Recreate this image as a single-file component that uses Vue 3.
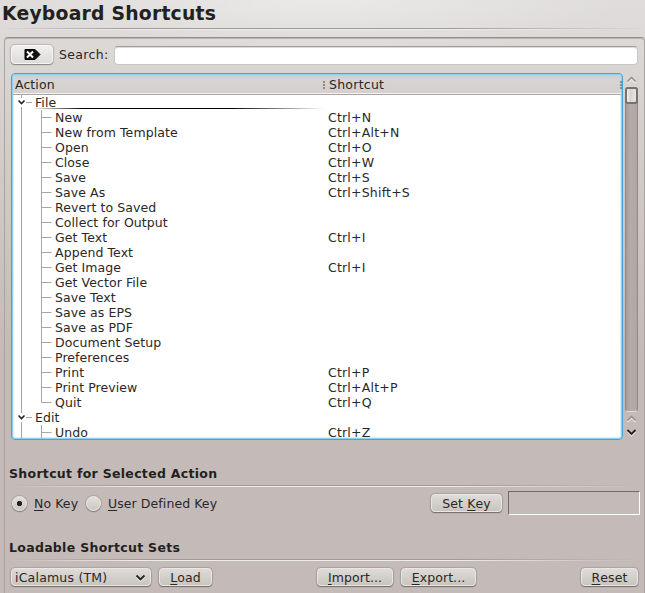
<script setup>
const actions = [
  ['New', 'Ctrl+N'], ['New from Template', 'Ctrl+Alt+N'], ['Open', 'Ctrl+O'], ['Close', 'Ctrl+W'],
  ['Save', 'Ctrl+S'], ['Save As', 'Ctrl+Shift+S'], ['Revert to Saved', ''], ['Collect for Output', ''],
  ['Get Text', 'Ctrl+I'], ['Append Text', ''], ['Get Image', 'Ctrl+I'], ['Get Vector File', ''],
  ['Save Text', ''], ['Save as EPS', ''], ['Save as PDF', ''], ['Document Setup', ''],
  ['Preferences', ''], ['Print', 'Ctrl+P'], ['Print Preview', 'Ctrl+Alt+P'], ['Quit', 'Ctrl+Q'],
]
const groups = [
  { name: 'File', items: actions, current: true },
  { name: 'Edit', items: [['Undo', 'Ctrl+Z']], open: true },
]
</script>

<template>
  <main class="page">
    <h1>Keyboard Shortcuts</h1>
    <div class="rule title-rule"></div>
    <section class="panel">
      <div class="search">
        <button class="btn clear" aria-label="Clear">
          <svg width="17" height="13" viewBox="0 0 17 13">
            <path d="M1 1.500h10l5 5-5 5H1z" fill="#111" stroke="#000" />
            <path d="M3 3.500l6 6M9 3.500l-6 6" stroke="#fff" stroke-width="2" />
          </svg>
        </button>
        <label>Search:</label>
        <div class="field"></div>
      </div>

      <div class="browser">
        <div class="list">
          <div class="head"><span class="c1">Action</span><i class="grip"></i><span class="c2">Shortcut</span><i class="grip last"></i></div>
          <div class="rows">
            <div v-for="g in groups" :key="g.name" class="group">
              <div class="row parent" :class="{ current: g.current }">
                <svg class="twist" width="20" height="15" viewBox="0 0 20 15">
                  <path d="M8.500 0v3M8.500 12v3M13 7.500h6" stroke="#a8a6a5" fill="none" />
                  <path d="M5.500 5.500l3 3 3-3" stroke="#222" stroke-width="1.600" fill="none" />
                </svg>
                <span>{{ g.name }}</span>
              </div>
              <div v-for="(a, i) in g.items" :key="a[0]" class="row">
                <svg class="branch" width="42" height="15" viewBox="0 0 42 15">
                  <path :d="i === g.items.length - 1 && !g.open ? 'M8.500 0v15M28.500 0v7.500h10' : 'M8.500 0v15M28.500 0v15M28.500 7.500h10'" stroke="#a8a6a5" fill="none" />
                </svg>
                <span class="name">{{ a[0] }}</span><span class="combo-key">{{ a[1] }}</span>
              </div>
            </div>
          </div>
        </div>
        <div class="scroll">
          <svg class="arr top" width="13" height="10" viewBox="0 0 13 10"><path d="M2.500 8l4-4 4 4" stroke="#f2f0ef" stroke-width="1.500" fill="none" /><path d="M2.500 6.500l4-4 4 4" stroke="#928d8b" stroke-width="1.500" fill="none" /></svg>
          <div class="track"><div class="thumb"></div></div>
          <svg class="arr" width="13" height="13" viewBox="0 0 13 13"><path d="M2.500 10l4-4 4 4" stroke="#eeeae9" stroke-width="1.500" fill="none" /><path d="M2.500 8.500l4-4 4 4" stroke="#928d8b" stroke-width="1.500" fill="none" /></svg>
          <svg class="arr" width="13" height="13" viewBox="0 0 13 13"><path d="M2.500 6.500l4 4 4-4" stroke="#eeeae9" stroke-width="1.500" fill="none" /><path d="M2.500 5l4 4 4-4" stroke="#222" stroke-width="1.800" fill="none" /></svg>
        </div>
      </div>

      <h2>Shortcut for Selected Action</h2>
      <div class="rule"></div>
      <div class="keys">
        <i class="radio on"></i><label class="nokey"><u>N</u>o Key</label>
        <i class="radio"></i><label><u>U</u>ser Defined Key</label>
        <button class="btn set">Set <u>K</u>ey</button>
        <div class="sunken"></div>
      </div>

      <h2 class="second">Loadable Shortcut Sets</h2>
      <div class="rule"></div>
      <div class="sets">
        <button class="btn combo"><span>iCalamus (TM)</span>
          <svg width="11" height="9" viewBox="0 0 11 9"><path d="M1.500 4l4 4 4-4" stroke="#f5f3f2" stroke-width="1.500" fill="none" /><path d="M1.500 2.500l4 4 4-4" stroke="#222" stroke-width="1.800" fill="none" /></svg>
        </button>
        <button class="btn load"><u>L</u>oad</button>
        <button class="btn import"><u>I</u>mport...</button>
        <button class="btn export"><u>E</u>xport...</button>
        <button class="btn reset"><u>R</u>eset</button>
      </div>
    </section>
  </main>
</template>

<style>
body { margin: 0; overflow: hidden; }
</style>
<style scoped>
* { box-sizing: border-box; }
.page {
  width: 645px; height: 593px; overflow: hidden; color: #2b2726;
  font: 12.5px/15px "DejaVu Sans", sans-serif; letter-spacing: .08px;
  background: radial-gradient(ellipse 300px 58px at 50% 0, rgba(240,240,239,.65), rgba(240,240,239,0)),
    linear-gradient(#dfdddc 0, #dad6d3 60px, #d2ccc9 160px, #c4bbb8 350px, #c4bbb8);
}
h1 { margin: 0; padding-left: 2px; height: 28px; font-size: 18.8px; letter-spacing: .22px; line-height: 27px; font-weight: bold; white-space: nowrap; color: #231f1e; }
h2 { margin: 0 0 0 -1px; padding-top: 26px; height: 45px; font-size: 12.5px; letter-spacing: .3px; line-height: 15px; font-weight: bold; color: #231f1e; }
.rule { height: 2px; background: linear-gradient(#a09a97 50%, #eeeceb 50%); -webkit-mask-image: linear-gradient(90deg, transparent, #000 20%, #000 70%, transparent); mask-image: linear-gradient(90deg, transparent, #000 20%, #000 70%, transparent); }
.panel { margin: 7px 0 0 4px; height: 580px; width: 641px; padding: 6px 4px 0 5px; border: 1px solid #aaa4a1; border-top-color: #948e8b; border-radius: 4px; box-shadow: inset 0 1px #bbb5b2; }
.search { display: flex; align-items: center; height: 20px; margin-top: 1px; }
.btn { flex: none; display: flex; align-items: center; justify-content: center; padding: 0; height: 18px; font: inherit; letter-spacing: inherit; color: inherit; white-space: pre; border: 1px solid #e9e7e5; border-radius: 4px; background: linear-gradient(#dedbd8, #c9c5be); box-shadow: 0 1px 1px #746e6b, 0 0 1px 1px #aaa3a0; }
.clear { width: 42px; height: 19px; margin: -1px 0 0 1px; background: linear-gradient(#f1f0ef, #dedbd8); box-shadow: 0 1px 1px #8c8684, 0 0 1px 1px #bcb7b4; border-color: #f8f7f6; }
.search label { margin: -1px 0 0 6px; width: 55px; letter-spacing: .35px; }
.field { flex: 1; height: 19px; margin-right: 2px; background: #fff; border: 1px solid #c8c5c3; border-top-color: #a09d9b; border-radius: 4px; box-shadow: inset 0 1px #dddbda; }
.browser { display: flex; margin: 8px 0 0 1px; height: 367px; }
.list { flex: none; width: 612px; height: 367px; border: 1px solid #43a5d6; border-radius: 4px; background: #fff; overflow: hidden; box-shadow: inset 0 0 0 1px #8fd0ef, inset 0 0 1px 2px #d5eefa; padding: 1px; }
.head { display: flex; align-items: center; height: 20px; padding-left: 2px; background: linear-gradient(#c5cfd3, #d8d4d1 4px, #d5d0cd); border-bottom: 1px solid #aaa39f; box-shadow: inset 0 -1px #f5f3f2; }
.c1 { width: 307px; flex: none; }
.c2 { width: 290px; flex: none; letter-spacing: .25px; }
.grip { flex: none; width: 6px; height: 8px; background: radial-gradient(circle at 1px 1px, #8d8987 .8px, transparent 1px) 0 0 / 6px 3px; }
.grip:not(.last) { margin-right: 1px; }
.c1 + .grip { margin-left: 1px; width: 5px; }
.last { margin-left: 1px; width: 2px; }
.rows { height: 343px; overflow: hidden; }
.row { display: flex; height: 15px; white-space: pre; }
.row svg { flex: none; }
.twist { width: 22px; padding-right: 2px; }
.parent { position: relative; }
.current::after { content: ""; position: absolute; left: 18px; width: 294px; top: 13px; height: 1px; background: linear-gradient(90deg, transparent, #000 18%, #000 68%, transparent); }
.name { width: 273px; flex: none; }
.combo-key { letter-spacing: .2px; }
.scroll { width: 13px; margin-left: 2px; display: flex; flex-direction: column; }
.arr { flex: none; display: block; }
.arr.top { margin: 2px 0 2px; }
.track { flex: none; width: 13px; height: 325px; border: 1px solid #8f8987; border-bottom-color: #e2dedc; border-radius: 4px; background: linear-gradient(90deg, #a39d9a, #b3aca9 40%, #aea7a4); }
.thumb { width: 13px; height: 17px; margin: -1px; border: 2px solid #77716f; border-radius: 3px; background: linear-gradient(90deg, #f3f1f0, #d6d2cf 35%, #e7e4e2); }
.keys { display: flex; align-items: center; height: 26px; margin-top: 3px; }
u { text-decoration: underline; text-decoration-thickness: 1px; text-underline-offset: 2px; }
.radio { flex: none; width: 15px; height: 15px; margin: 0 7px 0 2px; border-radius: 50%; border: 1px solid #eae7e5; background: linear-gradient(#e3e0dd, #cbc7c2); box-shadow: 0 1px 1px #827c79, 0 0 1px 1px #aca5a2; }
.on { background: radial-gradient(circle, #222 2.300px, transparent 3px), linear-gradient(#e3e0dd, #cbc7c2); }
.nokey { width: 50px; }
.set { width: 71px; margin-left: auto; }
.sunken { flex: none; width: 132px; height: 24px; margin: 0 0 0 6px; border: 1px solid #706a68; border-right-color: #fff; border-bottom-color: #fff; }
.second { padding-top: 24px; height: 43px; }
.sets { display: flex; padding: 7px 2px 0 1px; }
.combo { width: 140px; justify-content: space-between; padding: 0 4px 0 3px; letter-spacing: .2px; }
.load { width: 53px; margin-left: 8px; }
.import { width: 76px; margin-left: 105px; }
.export { width: 75px; margin-left: 8px; }
.reset { width: 57px; margin-left: auto; }
</style>
